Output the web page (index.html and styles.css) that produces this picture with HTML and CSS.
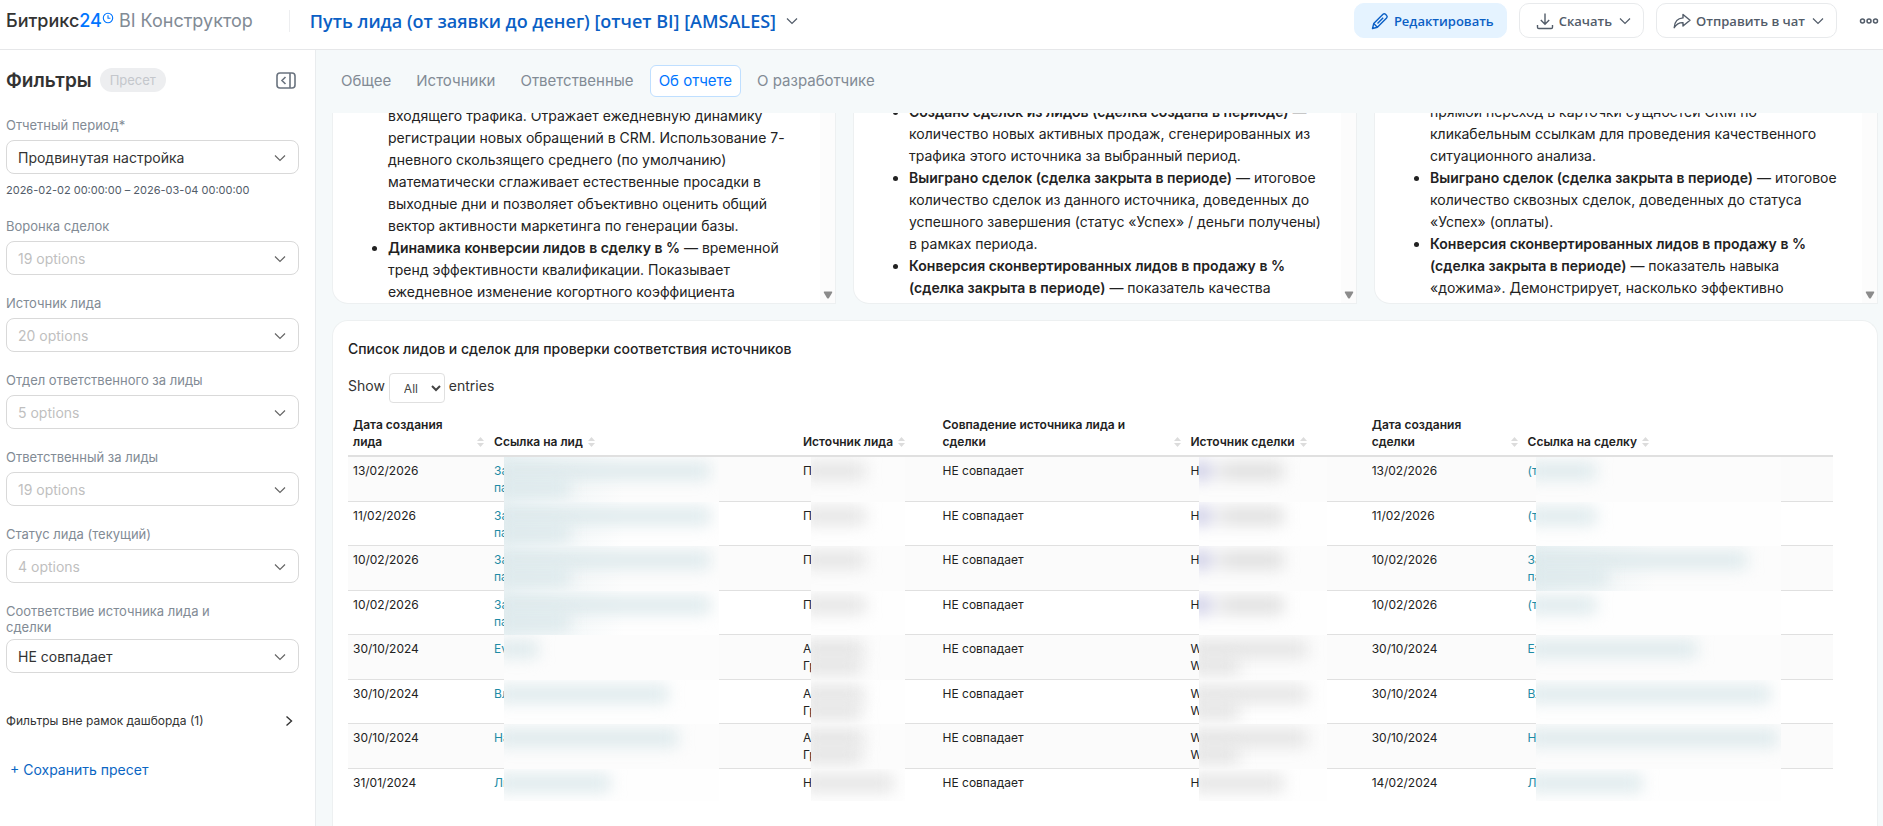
FILE: index.html
```html
<!DOCTYPE html>
<html lang="ru">
<head>
  <meta charset="UTF-8" />
  <meta name="viewport" content="width=device-width, initial-scale=1.0"/>
  <title>Битрикс24 BI Конструктор</title>
  <link rel="stylesheet" href="styles.css">
</head>
<body>

  <!-- Shared icons -->
  <svg class="sprite" aria-hidden="true">
    <symbol id="chevron" viewBox="0 0 12 8">
      <path d="M1 1.5 6 6.5 11 1.5" fill="none" stroke="currentColor" stroke-width="1.2"/>
    </symbol>
    <symbol id="sort" viewBox="0 0 7 10">
      <path d="M3.5 0 7 4H0zM3.5 10 7 6H0z" fill="currentColor"/>
    </symbol>
    <symbol id="arrow-down" viewBox="0 0 10 8">
      <path d="M1.5.5h7q1.2 0 .6 1.2L6 7Q5 8 4 7L.9 1.7Q.3.5 1.500.5z" fill="currentColor"/>
    </symbol>
  </svg>

  <header class="header">
    <a class="logo" href="#">
      <span class="logo-name">Битрикс<span class="logo-num">24</span></span>
      <svg class="logo-clock" viewBox="0 0 12 12"><circle cx="6" cy="6" r="4.700" fill="none" stroke="currentColor" stroke-width="1.100"/><path d="M6 3.300V6.300H8.400" fill="none" stroke="currentColor" stroke-width="1.100"/></svg>
      <span class="logo-product">BI Конструктор</span>
    </a>
    <button class="report-title">
      Путь лида (от заявки до денег) [отчет BI] [AMSALES]
      <svg class="title-chevron"><use href="#chevron"/></svg>
    </button>
    <div class="actions">
      <button class="btn btn-primary">
        <svg class="btn-icon" viewBox="0 0 18 18"><path d="M1.500 16.500 2.700 11.600 12 2.300a1.800 1.800 0 0 1 2.500 0l1.100 1.100a1.800 1.800 0 0 1 0 2.500L6.400 15.200zM2.700 11.600l3.700 3.600M12.200 5.800 6.500 11.500" fill="none" stroke="currentColor" stroke-width="1.400" stroke-linejoin="round"/></svg>
        Редактировать
      </button>
      <button class="btn">
        <svg class="btn-icon" viewBox="0 0 18 18"><path d="M9 1.500v10.500M4.800 8 9 12.200 13.200 8M1.500 13v2.200q0 1.300 1.300 1.300h12.400q1.300 0 1.300-1.300V13" fill="none" stroke="currentColor" stroke-width="1.400"/></svg>
        Скачать
        <svg class="btn-chevron"><use href="#chevron"/></svg>
      </button>
      <button class="btn">
        <svg class="btn-icon" viewBox="0 0 18 18"><path d="M10 2.500 17 8.300 10 14v-3.400C6 10.400 3.500 12 1.200 15.700 1.500 10 4.500 6.300 10 5.900z" fill="none" stroke="currentColor" stroke-width="1.400" stroke-linejoin="round"/></svg>
        Отправить в чат
        <svg class="btn-chevron"><use href="#chevron"/></svg>
      </button>
      <button class="more" aria-label="Ещё">
        <svg viewBox="0 0 20 6"><g fill="none" stroke="currentColor" stroke-width="1.500"><circle cx="3.500" cy="3" r="2"/><circle cx="10" cy="3" r="2"/><circle cx="16.500" cy="3" r="2"/></g></svg>
      </button>
    </div>
  </header>

  <div class="layout">
    <!-- Filters -->
    <aside class="sidebar">
      <div class="sidebar-head">
        <h2>Фильтры</h2>
        <span class="preset">Пресет</span>
        <button class="collapse" aria-label="Свернуть">
          <svg viewBox="0 0 20 17"><path d="M4 1h12q3 0 3 3v9q0 3-3 3H4q-3 0-3-3V4q0-3 3-3zM14 1v15M9.500 5 6 8.500 9.500 12" fill="none" stroke="currentColor" stroke-width="1.600"/></svg>
        </button>
      </div>

      <div class="field">
        <label for="period">Отчетный период*</label>
        <div class="select-wrap">
          <select id="period"><option>Продвинутая настройка</option></select>
          <svg><use href="#chevron"/></svg>
        </div>
        <p class="range">2026-02-02 00:00:00 – 2026-03-04 00:00:00</p>
      </div>
      <div class="field">
        <label for="funnel">Воронка сделок</label>
        <div class="select-wrap">
          <select id="funnel" class="empty"><option>19 options</option></select>
          <svg><use href="#chevron"/></svg>
        </div>
      </div>
      <div class="field">
        <label for="source">Источник лида</label>
        <div class="select-wrap">
          <select id="source" class="empty"><option>20 options</option></select>
          <svg><use href="#chevron"/></svg>
        </div>
      </div>
      <div class="field">
        <label for="department">Отдел ответственного за лиды</label>
        <div class="select-wrap">
          <select id="department" class="empty"><option>5 options</option></select>
          <svg><use href="#chevron"/></svg>
        </div>
      </div>
      <div class="field">
        <label for="owner">Ответственный за лиды</label>
        <div class="select-wrap">
          <select id="owner" class="empty"><option>19 options</option></select>
          <svg><use href="#chevron"/></svg>
        </div>
      </div>
      <div class="field">
        <label for="status">Статус лида (текущий)</label>
        <div class="select-wrap">
          <select id="status" class="empty"><option>4 options</option></select>
          <svg><use href="#chevron"/></svg>
        </div>
      </div>
      <div class="field">
        <label for="match">Соответствие источника лида и сделки</label>
        <div class="select-wrap">
          <select id="match"><option>НЕ совпадает</option></select>
          <svg><use href="#chevron"/></svg>
        </div>
      </div>

      <button class="outside">
        Фильтры вне рамок дашборда (1)
        <svg viewBox="0 0 8 12"><path d="M1.500 1.500 6.500 6 1.500 10.500" fill="none" stroke="currentColor" stroke-width="1.400"/></svg>
      </button>
      <button class="save-preset">+ Сохранить пресет</button>
    </aside>

    <main class="main">
      <nav class="tabs">
        <a href="#">Общее</a>
        <a href="#">Источники</a>
        <a href="#">Ответственные</a>
        <a href="#" class="active">Об отчете</a>
        <a href="#">О разработчике</a>
      </nav>

      <!-- Help cards -->
      <section class="notes">
        <article class="note">
          <ul>
            <li class="continued">входящего трафика. Отражает ежедневную динамику регистрации новых обращений в CRM. Использование 7-дневного скользящего среднего (по умолчанию) математически сглаживает естественные просадки в выходные дни и позволяет объективно оценить общий вектор активности маркетинга по генерации базы.</li>
            <li><b>Динамика конверсии лидов в сделку в %</b> — временной тренд эффективности квалификации. Показывает ежедневное изменение когортного коэффициента</li>
          </ul>
          <div class="scrollbar"><svg><use href="#arrow-down"/></svg></div>
        </article>
        <article class="note note-gap">
          <ul>
            <li><b>Создано сделок из лидов (сделка создана в периоде)</b> — количество новых активных продаж, сгенерированных из трафика этого источника за выбранный период.</li>
            <li><b>Выиграно сделок (сделка закрыта в периоде)</b> — итоговое количество сделок из данного источника, доведенных до успешного завершения (статус «Успех» / деньги получены) в рамках периода.</li>
            <li><b>Конверсия сконвертированных лидов в продажу в % (сделка закрыта в периоде)</b> — показатель качества</li>
          </ul>
          <div class="scrollbar"><svg><use href="#arrow-down"/></svg></div>
        </article>
        <article class="note note-gap">
          <ul>
            <li class="continued">прямой переход в карточки сущностей CRM по кликабельным ссылкам для проведения качественного ситуационного анализа.</li>
            <li><b>Выиграно сделок (сделка закрыта в периоде)</b> — итоговое количество сквозных сделок, доведенных до статуса «Успех» (оплаты).</li>
            <li><b>Конверсия сконвертированных лидов в продажу в % (сделка закрыта в периоде)</b> — показатель навыка «дожима». Демонстрирует, насколько эффективно</li>
          </ul>
          <div class="scrollbar"><svg><use href="#arrow-down"/></svg></div>
        </article>
      </section>

      <!-- Leads table -->
      <section class="panel">
        <h3>Список лидов и сделок для проверки соответствия источников</h3>
        <div class="length">
          <label for="page-size">Show</label>
          <select id="page-size"><option>All</option></select>
          <span>entries</span>
        </div>
        <table>
          <colgroup>
            <col class="col-date"><col class="col-link"><col class="col-source"><col class="col-match"><col class="col-deal-source"><col class="col-deal-date"><col>
          </colgroup>
          <thead>
            <tr>
              <th><div class="th"><span>Дата создания лида</span><svg><use href="#sort"/></svg></div></th>
              <th><div class="th"><span>Ссылка на лид</span><svg><use href="#sort"/></svg></div></th>
              <th><div class="th"><span>Источник лида</span><svg><use href="#sort"/></svg></div></th>
              <th><div class="th"><span>Совпадение источника лида и сделки</span><svg><use href="#sort"/></svg></div></th>
              <th><div class="th"><span>Источник сделки</span><svg><use href="#sort"/></svg></div></th>
              <th><div class="th"><span>Дата создания сделки</span><svg><use href="#sort"/></svg></div></th>
              <th><div class="th"><span>Ссылка на сделку</span><svg><use href="#sort"/></svg></div></th>
            </tr>
          </thead>
          <tbody>
            <tr>
              <td>13/02/2026</td>
              <td><a href="#">За<br>па</a><div class="mask mask-lead mask-long"><i style="width:200px"></i><i style="width:60px"></i></div></td>
              <td>П<div class="mask mask-source"><i style="width:54px"></i></div></td>
              <td>НЕ совпадает</td>
              <td>Н<div class="mask mask-deal-source tint"><i style="width:84px"></i></div></td>
              <td>13/02/2026</td>
              <td><a href="#">(т</a><div class="mask mask-deal"><i style="width:54px"></i></div></td>
            </tr>
            <tr>
              <td>11/02/2026</td>
              <td><a href="#">За<br>па</a><div class="mask mask-lead mask-long"><i style="width:200px"></i><i style="width:60px"></i></div></td>
              <td>П<div class="mask mask-source"><i style="width:54px"></i></div></td>
              <td>НЕ совпадает</td>
              <td>Н<div class="mask mask-deal-source tint"><i style="width:84px"></i></div></td>
              <td>11/02/2026</td>
              <td><a href="#">(т</a><div class="mask mask-deal"><i style="width:54px"></i></div></td>
            </tr>
            <tr>
              <td>10/02/2026</td>
              <td><a href="#">За<br>па</a><div class="mask mask-lead mask-long"><i style="width:200px"></i><i style="width:60px"></i></div></td>
              <td>П<div class="mask mask-source"><i style="width:54px"></i></div></td>
              <td>НЕ совпадает</td>
              <td>Н<div class="mask mask-deal-source tint"><i style="width:84px"></i></div></td>
              <td>10/02/2026</td>
              <td><a href="#">За<br>па</a><div class="mask mask-deal mask-long"><i style="width:205px"></i><i style="width:66px"></i></div></td>
            </tr>
            <tr>
              <td>10/02/2026</td>
              <td><a href="#">За<br>па</a><div class="mask mask-lead mask-long"><i style="width:200px"></i><i style="width:60px"></i></div></td>
              <td>П<div class="mask mask-source"><i style="width:54px"></i></div></td>
              <td>НЕ совпадает</td>
              <td>Н<div class="mask mask-deal-source tint"><i style="width:84px"></i></div></td>
              <td>10/02/2026</td>
              <td><a href="#">(т</a><div class="mask mask-deal"><i style="width:54px"></i></div></td>
            </tr>
            <tr>
              <td>30/10/2024</td>
              <td><a href="#">Ev</a><div class="mask mask-lead"><i style="width:28px"></i></div></td>
              <td>А<br>Гр<div class="mask mask-source"><i style="width:52px"></i><i style="width:50px"></i></div></td>
              <td>НЕ совпадает</td>
              <td>W<br>W<div class="mask mask-deal-source"><i style="width:108px"></i><i style="width:40px"></i></div></td>
              <td>30/10/2024</td>
              <td><a href="#">Ev</a><div class="mask mask-deal"><i style="width:155px"></i></div></td>
            </tr>
            <tr>
              <td>30/10/2024</td>
              <td><a href="#">Вл</a><div class="mask mask-lead"><i style="width:158px"></i></div></td>
              <td>А<br>Гр<div class="mask mask-source"><i style="width:52px"></i><i style="width:50px"></i></div></td>
              <td>НЕ совпадает</td>
              <td>W<br>W<div class="mask mask-deal-source"><i style="width:108px"></i><i style="width:40px"></i></div></td>
              <td>30/10/2024</td>
              <td><a href="#">Вл</a><div class="mask mask-deal"><i style="width:228px"></i></div></td>
            </tr>
            <tr>
              <td>30/10/2024</td>
              <td><a href="#">На</a><div class="mask mask-lead"><i style="width:168px"></i></div></td>
              <td>А<br>Гр<div class="mask mask-source"><i style="width:52px"></i><i style="width:50px"></i></div></td>
              <td>НЕ совпадает</td>
              <td>W<br>W<div class="mask mask-deal-source"><i style="width:108px"></i><i style="width:40px"></i></div></td>
              <td>30/10/2024</td>
              <td><a href="#">На</a><div class="mask mask-deal"><i style="width:236px"></i></div></td>
            </tr>
            <tr>
              <td>31/01/2024</td>
              <td><a href="#">Ли</a><div class="mask mask-lead"><i style="width:100px"></i></div></td>
              <td>Н<div class="mask mask-source"><i style="width:82px"></i></div></td>
              <td>НЕ совпадает</td>
              <td>НЕ<div class="mask mask-deal-source"><i style="width:84px"></i></div></td>
              <td>14/02/2024</td>
              <td><a href="#">Ли</a><div class="mask mask-deal"><i style="width:100px"></i></div></td>
            </tr>
          </tbody>
        </table>
      </section>
    </main>
  </div>

</body>
</html>
```
FILE: styles.css
```css
* {
  padding: 0;
  margin: 0;
  box-sizing: border-box;
}

body {
  height: 100vh;
  display: flex;
  flex-direction: column;
  background: white;
  color: #222;
  font-family: Inter, Arial, sans-serif;
  font-size: 14px;
  overflow: hidden;
}

button,
select {
  font-family: inherit;
  color: inherit;
  background: none;
  border: none;
  cursor: pointer;
}

a {
  text-decoration: none;
}

.sprite {
  display: none;
}

/* Header */
.header {
  display: flex;
  align-items: center;
  flex-shrink: 0;
  height: 50px;
  padding: 3px 4px 11px 6px;
  border-bottom: 1px solid #e6e7e9;
}

.logo {
  display: flex;
  align-items: center;
  font-size: 18px;
  line-height: 22px;
  padding-right: 36px;
  border-right: 1px solid #edeef0;
}

.logo-name {
  color: #333;
  font-weight: 500;
}

.logo-num {
  color: #0075ff;
}

.logo-clock {
  width: 12px;
  height: 12px;
  margin-bottom: 6px;
  color: #0075ff;
}

.logo-product {
  margin-left: 5px;
  color: #828b95;
}

.report-title {
  display: flex;
  align-items: center;
  gap: 10px;
  margin-left: 20px;
  color: #0b5fc5;
  font-family: "Open Sans", sans-serif;
  font-size: 18px;
  font-weight: 600;
}

.title-chevron {
  width: 12px;
  height: 8px;
  color: #525c69;
}

.actions {
  display: flex;
  align-items: center;
  gap: 12px;
  margin-left: auto;
}

.btn {
  display: flex;
  align-items: center;
  gap: 5px;
  height: 35px;
  padding: 0 12px 0 16px;
  border: 1px solid #e8eaec;
  border-radius: 10px;
  color: #525c69;
  font-family: "Open Sans", sans-serif;
  font-size: 13px;
  font-weight: 600;
}

.btn-primary {
  border-color: #e5f3ff;
  background: #e5f3ff;
  color: #0b5fc5;
}

.btn-icon {
  width: 18px;
  height: 18px;
}

.btn-chevron {
  width: 12px;
  height: 8px;
  margin-left: 2px;
}

.more {
  display: flex;
  padding-left: 10px;
  color: #525c69;
}

.more svg {
  width: 20px;
  height: 6px;
}

/* Sidebar */
.layout {
  display: flex;
  flex: 1;
  min-height: 0;
}

.sidebar {
  width: 316px;
  flex-shrink: 0;
  padding: 18px 16px 0 6px;
  border-right: 1px solid #e9ecee;
}

.sidebar-head {
  display: flex;
  align-items: center;
  height: 24px;
  margin-bottom: 25px;
}

.sidebar-head h2 {
  color: #333;
  font-size: 19px;
  font-weight: 600;
}

.preset {
  margin-left: 8px;
  padding: 0 10px;
  border-radius: 12px;
  background: #edeef0;
  color: #c4c7cc;
  font-size: 13px;
  line-height: 24px;
}

.collapse {
  display: flex;
  margin-left: auto;
  margin-right: 3px;
  color: #6a737f;
}

.collapse svg {
  width: 20px;
  height: 17px;
}

.field {
  margin-bottom: 20px;
}

.field label {
  display: block;
  min-height: 19px;
  margin-bottom: 4px;
  padding-right: 60px;
  color: #828b95;
  font-size: 13px;
  line-height: 16px;
}

.select-wrap {
  position: relative;
}

.select-wrap select {
  display: block;
  appearance: none;
  width: 100%;
  height: 34px;
  padding: 0 40px 0 11px;
  border: 1px solid #d9d9d9;
  border-radius: 8px;
  color: #333;
  font-size: 14px;
}

.select-wrap select.empty {
  color: #bfbfbf;
}

.select-wrap svg {
  position: absolute;
  right: 13px;
  top: 14px;
  width: 12px;
  height: 8px;
  color: #666;
  pointer-events: none;
}

.range {
  margin-top: 8px;
  color: #525c69;
  font-size: 11px;
  line-height: 16px;
}

.outside {
  display: flex;
  align-items: center;
  justify-content: space-between;
  width: 100%;
  margin-top: 40px;
  padding-right: 6px;
  color: #333;
  font-size: 12px;
  line-height: 16px;
}

.outside svg {
  width: 8px;
  height: 12px;
}

.save-preset {
  margin-top: 31px;
  padding-left: 4px;
  color: #0b66c3;
  font-size: 14px;
  line-height: 20px;
}

/* Main area */
.main {
  flex: 1;
  min-width: 0;
  display: flex;
  flex-direction: column;
  padding: 0 5px 0 16px;
  background: #f5f9fa;
}

.tabs {
  display: flex;
  gap: 7px;
  padding: 15px 0 16px;
}

.tabs a {
  padding: 0 8px;
  border: 1px solid transparent;
  border-radius: 6px;
  color: #828b95;
  font-size: 15px;
  line-height: 30px;
}

.tabs a.active {
  border-color: #bfdfff;
  background: white;
  color: #0075ff;
}

.notes {
  display: grid;
  grid-template-columns: repeat(3, 1fr);
  gap: 17px;
  flex-shrink: 0;
}

.note {
  display: flex;
  align-items: flex-end;
  height: 191px;
  overflow: hidden;
  border: 1px solid #edf0f1;
  border-top: none;
  border-radius: 0 0 0 16px;
  background: white;
}

.note ul {
  flex: 1;
  padding-left: 55px;
  padding-right: 15px;
  line-height: 22px;
}

.note-gap ul {
  padding-bottom: 4px;
}

.note b {
  font-weight: 600;
}

.note .continued {
  list-style: none;
}

.scrollbar {
  display: flex;
  align-self: stretch;
  align-items: flex-end;
  justify-content: center;
  width: 15px;
  padding-bottom: 4px;
  background: #fcfcfc;
  color: #8b8b8b;
}

.scrollbar svg {
  width: 10px;
  height: 8px;
}

.panel {
  flex: 1;
  margin-top: 16px;
  padding: 17px 44px 0 15px;
  border: 1px solid #edf0f1;
  border-bottom: none;
  border-radius: 16px 16px 0 0;
  background: white;
}

.panel h3 {
  font-size: 14px;
  font-weight: 500;
  line-height: 22px;
}

.length {
  display: flex;
  align-items: flex-start;
  gap: 4px;
  margin: 13px 0 8px;
  color: #333;
  line-height: 26px;
}

.length select {
  height: 30px;
  width: 56px;
  padding: 0 0 0 10px;
  border: 1px solid #e0e0e0;
  border-radius: 4px;
  color: #444;
  font-size: 12px;
}

table {
  width: 100%;
  table-layout: fixed;
  border-collapse: separate;
  border-spacing: 0;
  font-size: 12px;
  line-height: 17px;
}

.col-date { width: 9.5%; }
.col-link { width: 20.8%; }
.col-source { width: 9.4%; }
.col-match { width: 16.7%; }
.col-deal-source { width: 12.2%; }
.col-deal-date { width: 10.5%; }

th {
  padding: 5px;
  border-bottom: 2px solid #e0e0e0;
  font-weight: 600;
  text-align: left;
  vertical-align: bottom;
}

.th {
  display: flex;
  align-items: flex-end;
  gap: 5px;
}

.th svg {
  width: 7px;
  height: 10px;
  margin-bottom: 3px;
  flex-shrink: 0;
  color: #dcdcdc;
}

td {
  position: relative;
  padding: 5px;
  border-bottom: 1px solid #e0e0e0;
  vertical-align: top;
}

td a {
  color: #1f8ba5;
}

tbody tr {
  height: 45px;
}

tbody tr:nth-child(odd) {
  background: #fbfbfb;
}

tbody tr:nth-child(even) {
  height: 44px;
}

tbody tr:nth-child(even) td {
  padding-bottom: 4px;
}

tbody tr:last-child td {
  border-bottom: none;
}

/* Hidden personal data */
.mask {
  position: absolute;
  top: 0;
  bottom: -1px;
  left: 13px;
  padding-top: 6px;
  overflow: hidden;
  background-color: #fcfcfc;
}

tbody tr:nth-child(even) .mask {
  background-color: #fefefe;
}

tbody tr:last-child .mask {
  bottom: 12px;
}

.mask i {
  display: block;
  box-sizing: content-box;
  height: 16px;
  margin-left: -8px;
  padding-right: 8px;
  background: #e2e2e2;
  filter: blur(8px);
}

.mask i + i {
  margin-top: 1px;
}

.mask-lead {
  left: 15px;
  width: 215px;
}

.mask-source {
  width: 94px;
}

.mask-deal-source {
  width: 128px;
}

.mask-deal {
  width: 245px;
}

.mask-lead i,
.mask-deal i {
  padding-right: 14px;
  background: #dbe8eb;
}

.mask-long {
  background-image: linear-gradient(90deg, #eaf2f4, transparent 120px);
}

.tint i {
  background: linear-gradient(90deg, #c4c4e2 14px, #f2f2f4 24px, #dcdcdc 36px);
}
```
